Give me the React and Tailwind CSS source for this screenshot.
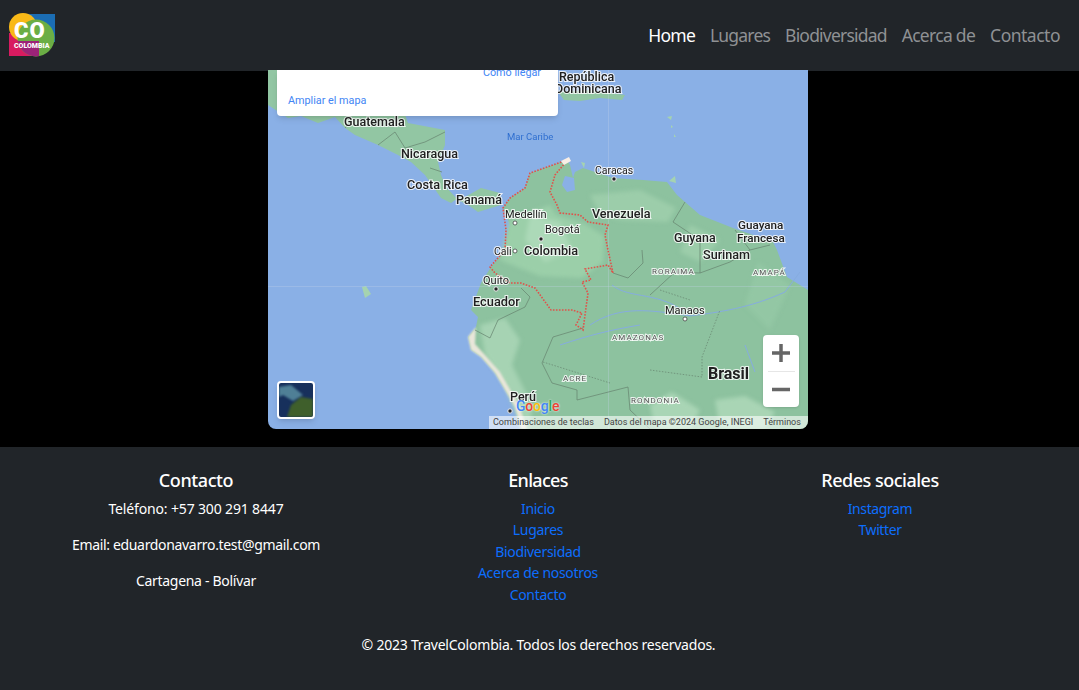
const navLinks = ['Home', 'Lugares', 'Biodiversidad', 'Acerca de', 'Contacto'];
const enlaces = ['Inicio', 'Lugares', 'Biodiversidad', 'Acerca de nosotros', 'Contacto'];
const redes = ['Instagram', 'Twitter'];

const FONT = 'font-["Noto_Sans",sans-serif]';

const Logo = () => (
  <svg width="46" height="45" viewBox="0 0 46 45">
    <defs>
      <clipPath id="logo-green">
        <circle cx="27" cy="25" r="18.5" />
      </clipPath>
    </defs>
    <rect x="14" y="1" width="32" height="28" fill="#1b6db3" />
    <rect x="0" y="20" width="30" height="23" fill="#d81b60" />
    <circle cx="14" cy="14" r="14" fill="#f9b917" />
    <circle cx="27" cy="25" r="18.5" fill="#6bae45" />
    <rect x="0" y="28" width="30" height="16" fill="#9b2378" clipPath="url(#logo-green)" />
    <text x="5" y="25" fontSize="22" fontWeight="900" letterSpacing="1" fill="#fff" fontFamily="Roboto, sans-serif">CO</text>
    <text x="5" y="35" fontSize="7" fontWeight="900" fill="#fff" fontFamily="Roboto, sans-serif">COLOMBIA</text>
  </svg>
);

const labels = [
  [344, 126, 'Guatemala', 12.5, 500, 0],
  [401, 158, 'Nicaragua', 12.5, 500, 0],
  [407, 189, 'Costa Rica', 12.7, 500, 0],
  [456, 204, 'Panamá', 12.5, 500, 0],
  [559, 81, 'República', 12.5, 500, 0],
  [555, 93, 'Dominicana', 12.5, 500, 0],
  [595, 174, 'Caracas', 10.5, 400, 0],
  [592, 218, 'Venezuela', 12.6, 500, 0],
  [505, 218, 'Medellín', 11, 400, 0],
  [545, 233, 'Bogotá', 10.8, 400, 0],
  [494, 255, 'Cali', 10.5, 400, 0],
  [524, 255, 'Colombia', 12.7, 500, 0],
  [483, 284, 'Quito', 11, 400, 0],
  [473, 306, 'Ecuador', 12.8, 500, 0],
  [674, 242, 'Guyana', 12.4, 500, 0],
  [738, 229, 'Guayana', 11.7, 500, 0],
  [737, 242, 'Francesa', 11.7, 500, 0],
  [703, 259, 'Surinam', 12.6, 500, 0],
  [652, 274, 'RORAIMA', 8, 400, 1],
  [753, 275, 'AMAPÁ', 8, 400, 1],
  [665, 314, 'Manaos', 11, 400, 0],
  [612, 340, 'AMAZONAS', 8, 400, 1],
  [708, 379, 'Brasil', 16, 700, 0],
  [563, 381, 'ACRE', 8, 400, 1],
  [631, 403, 'RONDONIA', 8, 400, 1],
  [510, 401, 'Perú', 12.5, 500, 0],
];

const dots = [[614, 179, 1], [541, 239, 1], [496, 289, 1], [510, 411, 1], [515, 223, 0], [515, 251, 0], [685, 319, 0]];

const MapArt = () => (
  <svg className="block h-full w-full blur-[0.4px]" viewBox="268 70 540 359">
    <rect x="268" y="70" width="540" height="359" fill="#8ab0e6" />
    {/* Mexico y Centroamerica */}
    <path d="M268 70 L268 105 L288 118 L301 116 L318 123 L335 117 L345 128 L355 135 L378 145 L398 155 L411 162 L425 175 L441 198 L451 203 L458 198 L465 197 L481 188 L500 193 L501 205 L478 212 L468 205 L458 200 L446 187 L441 175 L438 162 L445 145 L445 130 L408 123 L400 100 L400 70 Z" fill="#92c6a3" />
    {/* Antillas */}
    <path d="M558 92 L590 90 L625 95 L622 100 L600 98 L580 101 L564 100 Z" fill="#92c6a3" />
    <path d="M667 117 L672 116 L671 120 Z M671 125 L673 127 L671 128 Z M674 134 L676 137 L674 137 Z M669 181 L675 176 L676 183 Z M581 162 L585 163 L584 168 Z" fill="#a5d3b0" />
    <path d="M362 287 L366 286 L371 294 L365 298 Z" fill="#a5d3b0" />
    {/* Sudamerica */}
    <path d="M567 160 L530 173 L525 188 L510 198 L503 208 L510 225 L505 250 L491 267 L481 283 L471 310 L478 317 L476 327 L468 337 L471 350 L481 357 L495 373 L515 407 L521 429 L808 429 L808 290 L787 277 L777 250 L773 242 L733 228 L700 215 L677 195 L667 182 L643 180 L613 178 L583 168 L575 172 L573 178 L570 165 Z" fill="#8dc29f" />
    {/* Relieve */}
    <g className="blur-[2px]">
      <path d="M510 220 L550 205 L556 215 L585 224 L604 236 L603 262 L582 278 L540 276 L512 265 L500 260 Z" fill="#9bcfa9" />
      <path d="M530 215 L560 222 L572 250 L545 262 L525 240 Z" fill="#acd9b8" />
      <path d="M590 195 L640 190 L676 208 L668 222 L620 220 L600 214 Z" fill="#9ccdaa" />
      <path d="M480 325 L505 318 L520 340 L512 365 L532 405 L530 429 L522 429 L505 385 L485 355 Z" fill="#a6d3b3" />
      <path d="M650 405 L672 392 L700 410 L690 429 L655 429 Z M715 400 L745 396 L775 412 L765 429 L720 429 Z" fill="#a9d5b5" />
      <path d="M690 225 L720 240 L700 262 L680 252 Z" fill="#9ccdaa" />
      <path d="M758 262 L790 285 L770 330 L745 305 Z" fill="#93c7a4" />
    </g>
    {/* Costa clara */}
    <path className="blur-[0.8px]" d="M476 327 L468 337 L471 350 L481 357 L495 373 L515 407 L521 429 L527 429 L519 405 L500 372 L485 355 L475 344 Z" fill="#e9e6da" />
    {/* Lago de Maracaibo y rios */}
    <path d="M565 176 L574 178 L575 190 L567 192 L562 185 Z" fill="#8ab0e6" />
    <g fill="none" stroke="#86ace0" strokeWidth="1">
      <path d="M590 325 C620 305 650 310 690 316 C720 312 750 308 785 292 L800 272" />
      <path d="M612 285 C630 300 660 290 690 316" />
      <path d="M560 345 C590 335 610 330 640 325" />
      <path d="M745 345 L755 372" />
    </g>
    {/* Lineas de grilla */}
    <path d="M268 286.5 H808 M608.5 70 V429" stroke="#c3d4ea" strokeOpacity="0.6" strokeWidth="0.5" fill="none" />
    {/* Fronteras */}
    <g fill="none" stroke="#66836f" strokeWidth="0.7">
      <path d="M521 288 L530 297 L525 307 L498 320 L490 338 L475 330" />
      <path d="M583 328 L553 337 L542 363 L552 383 L577 390 L577 400 L628 387 L630 410 L650 429" />
      <path d="M613 273 L628 278 L643 263 L642 250" />
      <path d="M685 202 L673 222 L700 240 L700 273 L675 272 L650 295" />
      <path d="M700 273 L730 262 L750 250 L735 230" />
      <path d="M770 245 L750 250" />
      <path d="M345 128 L355 118 M378 145 L395 132 L405 148 L425 142 L445 132 M430 168 L442 172" />
      <path d="M543 362 L610 383 M650 370 L702 377 L702 357 L720 310 M660 290 L690 300" strokeDasharray="1.5 1.5" />
    </g>
    {/* Colombia */}
    <path d="M567 160 L530 173 L525 188 L510 198 L503 208 L506 230 L505 250 L490 267 L495 273 L510 283 L521 283 L535 288 L551 310 L565 310 L572 310 L582 313 L576 325 L583 330 L588 293 L582 282 L591 280 L585 269 L608 265 L613 273 L608 250 L605 235 L608 225 L588 222 L580 215 L560 213 L557 205 L550 192 L555 175 L565 163" fill="none" stroke="#e0524a" strokeWidth="1.6" strokeDasharray="1.6 1.4" />
    <path d="M561 161 L569 157 L571 161 L564 165 Z" fill="#f8eee6" />
    {/* Ciudades */}
    {dots.map(([x, y, dark]) => (
      <circle key={`${x}-${y}`} cx={x} cy={y} r={dark ? 2.2 : 2} fill={dark ? '#222' : '#fff'} stroke={dark ? '#eee' : '#444'} strokeWidth={dark ? 1 : 0.8} />
    ))}
    {labels.map(([x, y, text, size, weight, spaced]) => (
      <text key={text} x={x} y={y} fontSize={size} fontWeight={weight} letterSpacing={spaced ? 1.1 : 0} fill={spaced ? '#555' : '#202020'} stroke="#fff" strokeOpacity="0.8" strokeWidth="2.2" paintOrder="stroke" fontFamily="Roboto, sans-serif">
        {text}
      </text>
    ))}
    <text x="507" y="140" fontSize="9.5" fill="#2f6fd0" fontFamily="Roboto, sans-serif">Mar Caribe</text>
  </svg>
);

const MapEmbed = () => (
  <div className="relative h-[359px] w-[540px] overflow-hidden rounded-b-lg">
    <MapArt />
    <div className="absolute left-[9px] top-0 h-[46px] w-[281px] rounded-b-sm bg-white shadow-md font-['Roboto',sans-serif] text-[10.8px] text-[#4285f4]">
      <span className="absolute right-[17px] top-[-5px]">Cómo llegar</span>
      <span className="absolute bottom-[7px] left-[11px]">Ampliar el mapa</span>
    </div>
    <div className="absolute bottom-[10px] left-[9px] h-[38px] w-[38px] overflow-hidden rounded-sm border-2 border-white bg-[#17305c] shadow-md">
      <svg viewBox="0 0 34 34" className="block h-full w-full blur-[0.8px]">
        <path d="M0 4 L12 2 L24 12 L14 18 L4 12 L0 14 Z" fill="#4f7f96" />
        <path d="M8 34 L12 22 L22 14 L34 16 V34 Z" fill="#3f5f2b" />
      </svg>
    </div>
    <div className="absolute right-[9px] top-[265px] flex h-[72px] w-[36px] flex-col items-center rounded-sm bg-white shadow">
      <svg width="18" height="36" viewBox="0 0 18 36"><path d="M0 18 H18 M9 9 V27" stroke="#666" strokeWidth="3.5" /></svg>
      <div className="h-px w-[27px] bg-[#e6e6e6]" />
      <svg width="18" height="35" viewBox="0 0 18 35"><path d="M0 17.5 H18" stroke="#666" strokeWidth="3.5" /></svg>
    </div>
    <span className="absolute bottom-[16px] left-[248px] font-['Roboto',sans-serif] text-[14px] font-medium leading-none tracking-[-0.2px] [text-shadow:0_0_2px_#fff]">
      <span className="text-[#4285f4]">G</span><span className="text-[#ea4335]">o</span><span className="text-[#fbbc05]">o</span><span className="text-[#4285f4]">g</span><span className="text-[#34a853]">l</span><span className="text-[#ea4335]">e</span>
    </span>
    <div className="absolute bottom-0 right-0 flex h-[13px] w-[319px] items-center gap-[10px] bg-white/60 pl-[4px] font-['Roboto',sans-serif] text-[9px] leading-none text-[#444]">
      <span>Combinaciones de teclas</span>
      <span>Datos del mapa ©2024 Google, INEGI</span>
      <span>Términos</span>
    </div>
  </div>
);

const App = () => {
  return (
    <div className={`min-h-[690px] bg-black ${FONT}`}>
      <nav className="flex h-[71px] items-center justify-between bg-[#212529] pl-[9px] pr-[19px]">
        <Logo />
        <ul className="flex gap-[15px] text-[17.5px] tracking-[-0.8px] text-[#8f9194]">
          {navLinks.map((link, i) => (
            <li key={link} className={i === 0 ? 'text-white' : i === 4 ? 'tracking-[-0.5px]' : i === 3 ? 'tracking-[-0.7px]' : ''}>{link}</li>
          ))}
        </ul>
      </nav>

      <main className="-mt-px flex h-[377px] justify-center pr-[3px]">
        <MapEmbed />
      </main>

      <footer className="h-[243px] bg-[#212529] pt-[20px] text-center text-[14px] tracking-[-0.3px] text-white">
        <div className="grid grid-cols-3 pl-[25px] pr-[28px]">
          <div>
            <h5 className="mb-[5px] text-[18px] font-medium leading-[26px] tracking-[-0.4px]">Contacto</h5>
            <p className="mb-[14px] leading-[22px] tracking-[-0.15px]">Teléfono: +57 300 291 8447</p>
            <p className="mb-[14px] leading-[22px] tracking-[-0.33px]">Email: eduardonavarro.test@gmail.com</p>
            <p className="leading-[22px]">Cartagena - Bolívar</p>
          </div>
          <div>
            <h5 className="mb-[4.6px] text-[18px] font-medium leading-[26px] tracking-[-0.7px]">Enlaces</h5>
            <ul className="text-[#0d6efd]">
              {enlaces.map((item) => <li key={item} className="leading-[21.5px]">{item}</li>)}
            </ul>
          </div>
          <div>
            <h5 className="mb-[4.6px] text-[18px] font-medium leading-[26px] tracking-[-0.5px]">Redes sociales</h5>
            <ul className="text-[#0d6efd] tracking-[-0.4px]">
              {redes.map((item) => <li key={item} className="leading-[21.5px]">{item}</li>)}
            </ul>
          </div>
        </div>
        <p className="mt-[29px] pr-[2px] leading-[22px] tracking-[-0.22px]">© 2023 TravelColombia. Todos los derechos reservados.</p>
      </footer>
    </div>
  );
};

export default App;
